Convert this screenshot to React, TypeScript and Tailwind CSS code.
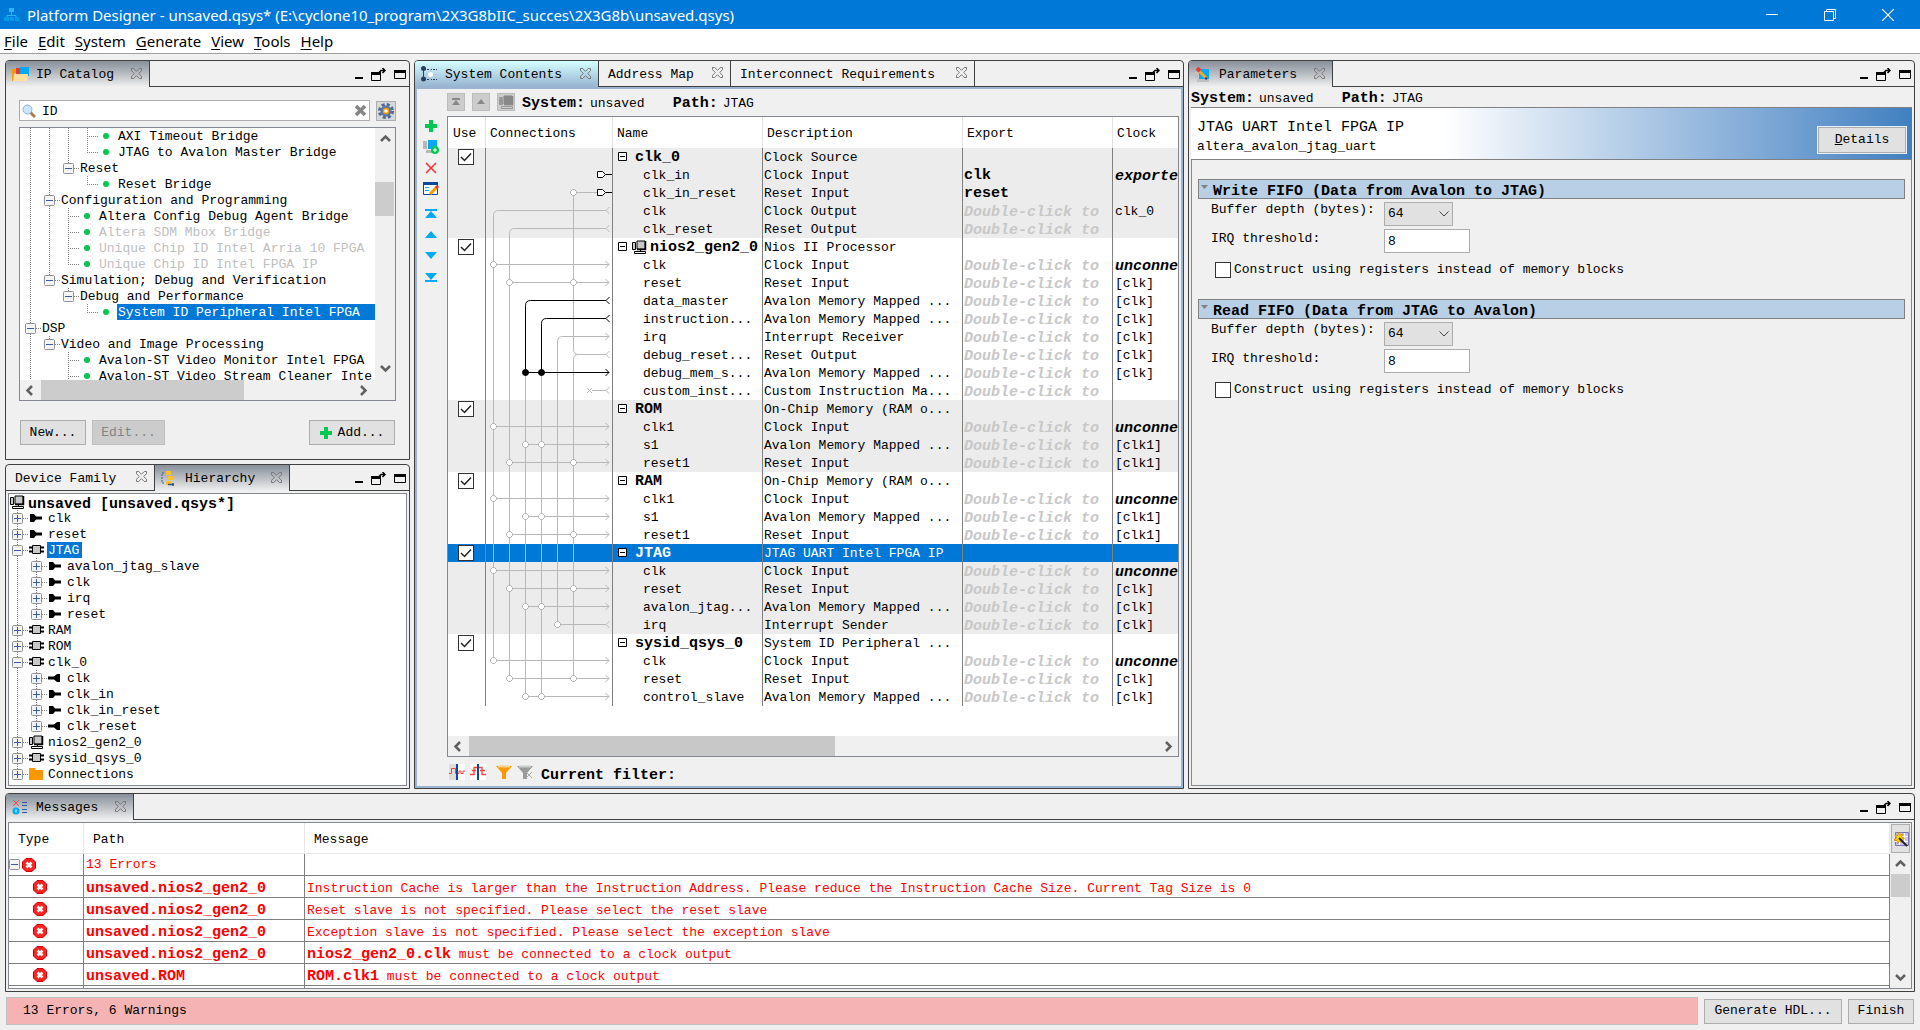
import React from "react";

type P = { children?: React.ReactNode };

/* ---------- shared icons ---------- */

function Svg({ w, h, children, className }: P & { w: number; h: number; className?: string }) {
  return (
    <svg width={w} height={h} viewBox={`0 0 ${w} ${h}`} fill="none" aria-hidden="true" className={"shrink-0 " + (className ?? "")}>
      {children}
    </svg>
  );
}

const TabClose = () => (
  <Svg w={11} h={11}>
    <path d="M.5.5h2.2L5.5 3.3 8.3.5h2.2v2.2L7.7 5.5l2.8 2.8v2.2H8.3L5.5 7.7 2.7 10.5H.5V8.3l2.8-2.8L.5 2.7z" stroke="#777" />
  </Svg>
);

const NiosIcon = ({ dim }: { dim?: boolean }) => (
  <Svg w={15} h={14}>
    <path d="M5 1h8v8H5z" fill={dim ? "#888" : "#c8c8c8"} stroke={dim ? "#888" : "#000"} />
    <path d="M13.500 1v8.500H5" stroke={dim ? "#888" : "#000"} strokeWidth="1.500" />
    <path d="M.5 2.500h3v7h-3z" fill={dim ? "#999" : "#c8c8c8"} stroke={dim ? "#999" : "#000"} />
    <path d="M8.500 9.500v2M2.500 11.500h11v2h-11z" stroke={dim ? "#999" : "#000"} />
  </Svg>
);

const ChipIcon = () => (
  <Svg w={15} h={10}>
    <path d="M0 2.500h15M0 6.500h15" stroke="#000" strokeWidth="2" />
    <path d="M3.500.5h8v8h-8z" fill="#c8c8c8" stroke="#000" />
  </Svg>
);

const PlugIn = () => (
  <Svg w={13} h={8}>
    <path d="M1 0h4l2 2.500h6v3H7L5 8H1z" fill="#000" />
  </Svg>
);

const PlugOut = () => (
  <Svg w={13} h={8}>
    <path d="M12 0H9L6 2.500H0v3h6L9 8h3z" fill="#000" />
  </Svg>
);

const FolderIcon = () => (
  <Svg w={15} h={12}>
    <path d="M0 0h6l1 2h7v10H0z" fill="#ff9800" />
  </Svg>
);

const Plus = () => (
  <Svg w={12} h={12}>
    <path d="M4 0h4v4h4v4H8v4H4V8H0V4h4z" fill="#00c853" />
  </Svg>
);

const ErrorIcon = () => (
  <Svg w={14} h={14}>
    <path d="M4 .5h6L13.500 4v6L10 13.500H4L.5 10V4z" fill="#f22" stroke="#d00000" />
    <path d="M4.500 4.500l5 5M9.500 4.500l-5 5" stroke="#fff" strokeWidth="2.600" />
  </Svg>
);

const arrowPaths = {
  up: "M1 7l4.500-4.500L10 7",
  down: "M1 3l4.500 4.500L10 3",
  left: "M7 1L2.500 5.500 7 10",
  right: "M3 1l4.500 4.500L3 10",
};

function ScrollArrow({ dir }: { dir: keyof typeof arrowPaths }) {
  return (
    <button aria-label={"Scroll " + dir} className="flex size-5 shrink-0 items-center justify-center">
      <Svg w={11} h={11}>
        <path d={arrowPaths[dir]} stroke="#606060" strokeWidth="2.500" />
      </Svg>
    </button>
  );
}

/* ---------- panels ---------- */

type Tab = { label: string; icon?: React.ReactNode; width: string; active?: boolean };

function WindowControls() {
  return (
    <div className="flex items-center gap-2 pt-0.5 pr-[3px]">
      <button aria-label="Minimize" className="mt-2">
        <Svg w={8} h={3}><path d="M0 1h8" stroke="#000" strokeWidth="2" /></Svg>
      </button>
      <button aria-label="Float">
        <Svg w={15} h={14}>
          <path d="M.5 4.500h9v8h-9z" stroke="#000" />
          <path d="M0 5.500h10" stroke="#000" strokeWidth="3" />
          <path d="M7 5.500l3-3h4M11.500 0l2.500 2.500L11.500 5" stroke="#000" strokeWidth="1.500" />
        </Svg>
      </button>
      <button aria-label="Maximize">
        <Svg w={12} h={10}>
          <path d="M.5.5h11v8H.5z" stroke="#000" />
          <path d="M0 1.500h12" stroke="#000" strokeWidth="3" />
        </Svg>
      </button>
    </div>
  );
}

function Panel({ tabs, focused, className, children }: P & { tabs: Tab[]; focused?: boolean; className?: string }) {
  return (
    <section className={"flex min-w-0 flex-col overflow-hidden rounded-t-[4px] border border-[#404040] bg-[#f0f0f0] " + (className ?? "")}>
      <div className="flex h-[26px] shrink-0">
        {tabs.map((t) => {
          const look = !t.active
            ? "border-b"
            : focused
              ? "bg-linear-to-b from-[#d5ffff] to-[#98b3d0]"
              : "bg-linear-to-b from-[#878f99] to-[#f0f0f0]";
          return (
            <button key={t.label} className={`flex shrink-0 items-center border-r border-[#404040] pr-[7px] pl-1.5 ${t.width} ${look}`}>
              {t.icon && <span className="mr-[7px] w-[17px]">{t.icon}</span>}
              <span className={t.icon ? "pt-0.5" : "pt-0.5 pl-[3px]"}>{t.label}</span>
              <span className="ml-auto pb-0.5"><TabClose /></span>
            </button>
          );
        })}
        <div className="flex flex-1 items-center justify-end border-b border-[#404040]">
          <WindowControls />
        </div>
      </div>
      {children}
    </section>
  );
}

function PathLine() {
  return (
    <p className="flex items-center pt-1 leading-[18px]">
      <b className="text-[15px]">System:</b>
      <span className="ml-[5px]">unsaved</span>
      <b className="ml-7 text-[15px]">Path:</b>
      <span className="ml-[5px]">JTAG</span>
    </p>
  );
}

/* ---------- trees ---------- */

/* Guide codes: "|" line, "t" branch, "l" last branch, "." blank,
   "m" minus with line through, "n" minus at the end of a line, "p" plus, "q" last plus */
function Guide({ code }: { code: string }) {
  const box = "mnpq".includes(code);
  const full = "|tmp".includes(code);
  const branch = "tlmnpq".includes(code);
  return (
    <Svg w={19} h={16}>
      {code !== "." && <path d={full ? "M8.500 0V16" : "M8.500 0V8"} stroke="#808080" strokeDasharray="1 1" />}
      {branch && <path d="M8 8.500H19" stroke="#808080" strokeDasharray="1 1" />}
      {box && (
        <>
          <rect x="3.500" y="3.500" width="10" height="10" rx="1" fill="#f4f4f4" stroke="#919191" />
          <path d="M5 8.500h7" stroke="#3a5ba8" />
          {"pq".includes(code) && <path d="M8.500 5v7" stroke="#3a5ba8" />}
        </>
      )}
    </Svg>
  );
}

const catalog: [string, string, string?][] = [
  ["|||t", "AXI Timeout Bridge"],
  ["|||l", "JTAG to Avalon Master Bridge"],
  ["||n", "Reset"],
  ["||.l", "Reset Bridge"],
  ["|m", "Configuration and Programming"],
  ["||t", "Altera Config Debug Agent Bridge"],
  ["||t", "Altera SDM Mbox Bridge", "off"],
  ["||t", "Unique Chip ID Intel Arria 10 FPGA", "off"],
  ["||l", "Unique Chip ID Intel FPGA IP", "off"],
  ["|n", "Simulation; Debug and Verification"],
  ["|.n", "Debug and Performance"],
  ["|..l", "System ID Peripheral Intel FPGA", "sel"],
  ["m", "DSP"],
  ["|n", "Video and Image Processing"],
  ["|.t", "Avalon-ST Video Monitor Intel FPGA"],
  ["|.t", "Avalon-ST Video Stream Cleaner Inte"],
];

function CatalogTree() {
  return (
    <ul className="h-[252px] min-w-0 flex-1 overflow-hidden bg-white pl-0.5">
      {catalog.map(([g, label, state]) => {
        const leaf = /[tl]$/.test(g);
        const tone = state === "sel" ? "flex-1 bg-[#0078d7] text-white" : state === "off" ? "text-[#c0c0c0]" : "";
        return (
          <li key={g + label} className="flex h-4 items-center leading-4 whitespace-pre">
            {g.split("").map((c, i) => <Guide key={i} code={c} />)}
            {leaf && (
              <span className="w-[19px] shrink-0 pl-[5px]">
                <span className="block size-1.5 rounded-full bg-[#00c853]" />
              </span>
            )}
            <span className={"h-4 pl-px leading-[18px] " + tone}>{label}</span>
          </li>
        );
      })}
    </ul>
  );
}

const hierarchy: [string, React.ReactNode, string, boolean?][] = [
  ["p", <PlugIn />, "clk"],
  ["p", <PlugIn />, "reset"],
  ["m", <ChipIcon />, "JTAG", true],
  ["|p", <PlugIn />, "avalon_jtag_slave"],
  ["|p", <PlugIn />, "clk"],
  ["|p", <PlugIn />, "irq"],
  ["|q", <PlugIn />, "reset"],
  ["p", <ChipIcon />, "RAM"],
  ["p", <ChipIcon />, "ROM"],
  ["m", <ChipIcon />, "clk_0"],
  ["|p", <PlugOut />, "clk"],
  ["|p", <PlugIn />, "clk_in"],
  ["|p", <PlugIn />, "clk_in_reset"],
  ["|q", <PlugOut />, "clk_reset"],
  ["p", <NiosIcon />, "nios2_gen2_0"],
  ["p", <ChipIcon />, "sysid_qsys_0"],
  ["q", <FolderIcon />, "Connections"],
];

/* ---------- system contents ---------- */

type Row = { name: string; desc: string; head?: boolean; exp?: string; clk?: string };
type Group = { shade: boolean; rows: Row[] };

const AMM = "Avalon Memory Mapped ...";
const DC = "Double-click to";
const UN = "unconne";
const r = (name: string, desc: string, clk = "", exp = DC): Row => ({ name, desc, clk, exp });
const head = (name: string, desc: string): Row => ({ name, desc, head: true });

const groups: Group[] = [
  { shade: true, rows: [
    head("clk_0", "Clock Source"),
    r("clk_in", "Clock Input", "exporte", "clk"),
    r("clk_in_reset", "Reset Input", "", "reset"),
    r("clk", "Clock Output", "clk_0"),
    r("clk_reset", "Reset Output"),
  ] },
  { shade: false, rows: [
    head("nios2_gen2_0", "Nios II Processor"),
    r("clk", "Clock Input", UN),
    r("reset", "Reset Input", "[clk]"),
    r("data_master", AMM, "[clk]"),
    r("instruction...", AMM, "[clk]"),
    r("irq", "Interrupt Receiver", "[clk]"),
    r("debug_reset...", "Reset Output", "[clk]"),
    r("debug_mem_s...", AMM, "[clk]"),
    r("custom_inst...", "Custom Instruction Ma..."),
  ] },
  { shade: true, rows: [
    head("ROM", "On-Chip Memory (RAM o..."),
    r("clk1", "Clock Input", UN),
    r("s1", AMM, "[clk1]"),
    r("reset1", "Reset Input", "[clk1]"),
  ] },
  { shade: false, rows: [
    head("RAM", "On-Chip Memory (RAM o..."),
    r("clk1", "Clock Input", UN),
    r("s1", AMM, "[clk1]"),
    r("reset1", "Reset Input", "[clk1]"),
  ] },
  { shade: true, rows: [
    head("JTAG", "JTAG UART Intel FPGA IP"),
    r("clk", "Clock Input", UN),
    r("reset", "Reset Input", "[clk]"),
    r("avalon_jtag...", AMM, "[clk]"),
    r("irq", "Interrupt Sender", "[clk]"),
  ] },
  { shade: false, rows: [
    head("sysid_qsys_0", "System ID Peripheral ..."),
    r("clk", "Clock Input", UN),
    r("reset", "Reset Input", "[clk]"),
    r("control_slave", AMM, "[clk]"),
  ] },
];

const Y = (i: number) => i * 18 + 8.5;
const G = "#b8b8b8";

function Wire({ row, from, kind, color = G }: { row: number; from: number; kind: "in" | "out"; color?: string }) {
  const y = Y(row);
  const tip = kind === "in" ? `M119.500 ${y - 3.5}l3.500 3.500l-3.500 3.500` : `M123.500 ${y - 3.5}l-3.500 3.500l3.500 3.500`;
  return <path d={`M${from} ${y}H${kind === "in" ? 123 : 120}${tip}`} stroke={color} />;
}

function Node({ x, row }: { x: number; row: number }) {
  const y = Y(row);
  return <path d={`M${x - 1} ${y - 3}h2l2 2v2l-2 2h-2l-2-2v-2z`} fill="#fff" stroke="#b0b0b0" />;
}

const taps: [number, number[], ("in" | "out")?][] = [
  [6, [7.5]], [7, [23.5, 87.5]],
  [15, [7.5]], [16, [39.5, 55.5]], [17, [23.5, 87.5]],
  [19, [7.5]], [20, [39.5, 55.5]], [21, [23.5, 87.5]],
  [23, [7.5]], [24, [23.5, 87.5]], [25, [39.5, 55.5]], [26, [71.5], "out"],
  [28, [7.5]], [29, [23.5, 87.5]], [30, [39.5, 55.5]],
];

function bend(x: number, row: number, to: number) {
  const y = Y(row);
  return `M${x} ${Y(to)}V${y + 5}q0-5 5-5`;
}

function ConnectionDiagram() {
  return (
    <svg width="126" height="558" viewBox="0 0 126 558" fill="none" aria-hidden="true" className="pointer-events-none absolute top-[31px] left-[38px]">
      <g stroke={G}>
        <path d={bend(7.5, 3, 28)} />
        <path d={bend(23.5, 4, 29)} />
        <path d={`M39.500 ${Y(12)}V${Y(30)}M55.500 ${Y(12)}V${Y(30)}`} />
        <path d={bend(71.5, 10, 26)} />
        <path d={`M87.500 ${Y(2)}V${Y(11) - 5}q0 5 5 5`} />
        <path d={bend(87.5, 11, 29)} />
        <path d={`M87.500 ${Y(2)}H112`} />
        <path d={`M101 ${Y(13) - 2.5}l5 5m0-5l-5 5`} />
      </g>
      <Wire row={3} from={12.5} kind="out" />
      <Wire row={4} from={28.5} kind="out" />
      <Wire row={10} from={76.5} kind="in" />
      <Wire row={11} from={92.5} kind="out" />
      <Wire row={13} from={106} kind="out" />
      {taps.map(([row, xs, kind]) => <Wire key={row} row={row} from={xs[0]} kind={kind ?? "in"} />)}
      <Node x={87.5} row={2} />
      {taps.map(([row, xs]) => xs.map((x) => <Node key={row + "-" + x} x={x} row={row} />))}
      <g stroke="#000">
        <path d={bend(39.5, 8, 12)} />
        <path d={bend(55.5, 9, 12)} />
        {[1, 2].map((i) => (
          <path key={i} d={`M111.500 ${Y(i) - 3}h5l3 3l-3 3h-5zM119.500 ${Y(i)}H126`} fill="#fff" />
        ))}
        <circle cx="39.500" cy={Y(12)} r="3" fill="#000" />
        <circle cx="55.500" cy={Y(12)} r="3" fill="#000" />
      </g>
      <Wire row={8} from={44.5} kind="out" color="#000" />
      <Wire row={9} from={60.5} kind="out" color="#000" />
      <Wire row={12} from={39.5} kind="in" color="#000" />
    </svg>
  );
}

function CheckBox({ id, checked, label }: { id?: string; checked?: boolean; label?: string }) {
  return (
    <span className="relative block size-4 shrink-0">
      <input id={id} type="checkbox" aria-label={label} defaultChecked={checked} className="peer block size-4 appearance-none border border-[#333] bg-white" />
      <svg viewBox="0 0 16 16" fill="none" aria-hidden="true" className="pointer-events-none absolute inset-0 hidden size-4 peer-checked:block">
        <path d="M3 8l3.500 3.500L13 4.500" stroke="#222" strokeWidth="1.500" />
      </svg>
    </span>
  );
}

function SystemTable() {
  const th = "border-r border-[#e2e2e2] font-normal text-left pt-0.5";
  const td = "border-r border-[#808080] p-0 overflow-hidden";
  return (
    <div className="relative">
      <table className="w-full table-fixed border-separate border-spacing-0 whitespace-pre">
        <colgroup>
          <col className="w-[38px]" /><col className="w-[127px]" /><col className="w-[150px]" />
          <col className="w-[200px]" /><col className="w-[150px]" /><col />
        </colgroup>
        <thead>
          <tr className="h-[31px]">
            <th className={th + " pl-[5px]"}>Use</th>
            <th className={th + " pl-1"}>Connections</th>
            <th className={th + " pl-1"}>Name</th>
            <th className={th + " pl-1"}>Description</th>
            <th className={th + " pl-1"}>Export</th>
            <th className="pt-0.5 pl-1 text-left font-normal">Clock</th>
          </tr>
        </thead>
        <tbody>
          {groups.map((g, gi) => g.rows.map((row, i) => {
            const sel = row.head && row.name === "JTAG";
            const tone = sel ? "bg-[#0078d7] text-white" : g.shade ? "bg-[#ececec]" : "bg-white";
            const exported = row.exp && row.exp !== DC;
            const loud = row.clk === UN || row.clk === "exporte";
            return (
              <tr key={gi + "-" + i} className={"h-[18px] leading-5 " + tone}>
                <td className={td}>
                  {row.head && <div className="pl-2.5"><CheckBox checked label={"Use " + row.name} /></div>}
                </td>
                <td className={td} />
                <td className={td}>
                  {row.head ? (
                    <div className="flex h-[18px] items-center pl-[5px]">
                      <Svg w={10} h={10} className="mr-1">
                        <path d="M.5.5h8v8h-8z" fill="#fff" stroke="#000" /><path d="M2 4.500h5" stroke="#000" />
                      </Svg>
                      {row.name === "nios2_gen2_0" ? <span className="mr-[3px]"><NiosIcon /></span> : <span className="w-[3px]" />}
                      <b className="pt-0.5 text-[15px] leading-4">{row.name}</b>
                    </div>
                  ) : (
                    <div className="h-[18px] pl-[30px]">{row.name}</div>
                  )}
                </td>
                <td className={td}><div className="h-[18px] pl-px">{row.desc}</div></td>
                <td className={td}>
                  <div className={"h-[18px] pl-px text-[15px] font-bold " + (exported ? "" : "pt-0.5 leading-[18px] text-[#c8c8c8] italic")}>{row.exp}</div>
                </td>
                <td className="overflow-hidden p-0">
                  <div className={"h-[18px] pl-0.5 " + (loud ? "pt-0.5 text-[15px] leading-[18px] font-bold italic" : "")}>{row.clk}</div>
                </td>
              </tr>
            );
          }))}
        </tbody>
      </table>
      <ConnectionDiagram />
    </div>
  );
}

function ToolStrip() {
  const tools: [string, React.ReactNode][] = [
    ["Add", <Plus />],
    ["Add component", <Svg w={16} h={15}><path d="M0 2h4v8H0zM3 11h7v3H3z" fill="#b8b8b8" /><path d="M5 1h9v9H5z" fill="#03a9f4" /><circle cx="12" cy="11" r="4" fill="#00c853" /><path d="M12 9v4M10 11h4" stroke="#fff" /></Svg>],
    ["Remove", <Svg w={12} h={12}><path d="M1 1l10 10M11 1L1 11" stroke="#f03030" strokeWidth="1.500" /></Svg>],
    ["Edit", <Svg w={16} h={14}><path d="M.5.5h14v12H.5z" fill="#fff" stroke="#0d47a1" /><path d="M0 1.500h15" stroke="#0d47a1" strokeWidth="3" /><path d="M2 5.500h4M2 8.500h4" stroke="#03a9f4" /><path d="M7 12l7-7" stroke="#ff9800" strokeWidth="3" /><path d="M13 6l2-2" stroke="#e53935" strokeWidth="3" /></Svg>],
    ["Move to top", <Svg w={12} h={10}><path d="M0 1h12" stroke="#03a9f4" strokeWidth="2" /><path d="M6 2l6 7H0z" fill="#03a9f4" /></Svg>],
    ["Move up", <Svg w={12} h={8}><path d="M6 0l6 7H0z" fill="#03a9f4" /></Svg>],
    ["Move down", <Svg w={12} h={8}><path d="M6 7l6-7H0z" fill="#03a9f4" /></Svg>],
    ["Move to bottom", <Svg w={12} h={10}><path d="M0 9h12" stroke="#03a9f4" strokeWidth="2" /><path d="M6 8l6-7H0z" fill="#03a9f4" /></Svg>],
  ];
  return (
    <div className="flex w-7 shrink-0 flex-col items-center pt-[26px]">
      {tools.map(([name, icon], i) => (
        <button key={name} aria-label={name} className={"flex h-[21px] w-full items-center justify-center " + (i === 4 ? "mt-1" : "")}>{icon}</button>
      ))}
    </div>
  );
}

function SystemContents() {
  const small = "flex size-[18px] items-center justify-center border border-[#bcbcbc] bg-[#cccccc]";
  return (
    <div className="flex flex-1 border-2 border-[#9ab4d1]">
      <ToolStrip />
      <div className="ml-0.5 flex min-w-0 flex-1 flex-col pr-0.5">
        <div className="flex h-[27px] items-center pb-0.5">
          <button aria-label="Top level" className={small}><Svg w={8} h={8}><path d="M0 1h8" stroke="#888" strokeWidth="2" /><path d="M4 2l4 5H0z" fill="#888" /></Svg></button>
          <button aria-label="Up one level" className={small + " ml-[7px]"}><Svg w={8} h={6}><path d="M4 0l4 5H0z" fill="#888" /></Svg></button>
          <button aria-label="Drill into" className={small + " mr-[7px] ml-[7px]"}><NiosIcon dim /></button>
          <PathLine />
        </div>
        <div className="flex flex-1 flex-col overflow-hidden border border-[#828790] bg-white">
          <SystemTable />
          <div className="mt-auto flex h-5 bg-[#f0f0f0]">
            <ScrollArrow dir="left" />
            <div className="flex flex-1"><div className="ml-px w-[53%] bg-[#c8c8c8]" /></div>
            <ScrollArrow dir="right" />
          </div>
        </div>
        <div className="flex h-[29px] items-center gap-[5px] pl-0.5">
          <Svg w={16} h={16}><path d="M0 0h7v16H0z" fill="#dcdcdc" /><path d="M9 0h7v16H9z" fill="#fff" /><path d="M0 9.500h2.500v-5h4v5H10V7h2v2.500h2V7h2" stroke="#f44336" /><path d="M8 0v16" stroke="#0d47a1" strokeWidth="2" /></Svg>
          <Svg w={16} h={16}><path d="M0 0h16v16H0z" fill="#fff" /><path d="M0 10.500h4v-7h8v7h4M2 6.500h4M10 6.500h5" stroke="#f44336" strokeWidth="1.300" /><path d="M8 0v16" stroke="#0d47a1" strokeWidth="2" /></Svg>
          <Svg w={16} h={14} className="ml-[5px]"><path d="M0 1h16l-6 7v6H6V8z" fill="#ff9800" /><path d="M2 1.500h12" stroke="#ffd180" strokeWidth="2" /></Svg>
          <Svg w={16} h={14}><path d="M0 1h16l-6 7v6H6V8z" fill="#999" /><path d="M2 1.500h12" stroke="#ccc" strokeWidth="2" /><path d="M9 7l6 6M15 7l-6 6" stroke="#aaa" /></Svg>
          <b className="ml-[3px] pt-2 text-[15px]">Current filter:</b>
        </div>
      </div>
    </div>
  );
}

/* ---------- parameters ---------- */

function FifoSection({ id, title }: { id: string; title: string }) {
  return (
    <section className="mb-[19px]">
      <h2 className="flex h-5 items-center gap-[5px] border border-[#808080] bg-[#b8cfe5] pl-0.5 text-[15px] font-bold">
        <Svg w={7} h={12}><path d="M0 2h7L3.500 6z" fill="#808080" /></Svg>
        <span className="pt-1.5 leading-4">{title}</span>
      </h2>
      <div className="grid grid-cols-[173px_auto] pt-[3px] pl-[13px]">
        <label htmlFor={id + "-depth"} className="h-[27px] leading-4">Buffer depth (bytes):</label>
        <span className="relative h-6 w-[69px]">
          <select id={id + "-depth"} className="h-6 w-full appearance-none border border-[#adadad] bg-[#e1e1e1] pl-[3px]">
            <option>64</option>
          </select>
          <Svg w={10} h={6} className="pointer-events-none absolute top-[9px] right-1"><path d="M.5.5L5 5 9.500.5" stroke="#444" /></Svg>
        </span>
        <label htmlFor={id + "-irq"} className="h-[27px] leading-5">IRQ threshold:</label>
        <input id={id + "-irq"} defaultValue="8" className="h-6 w-[86px] border border-[#adadad] bg-white pl-[3px]" />
      </div>
      <div className="mt-1 flex items-center gap-[3px] pl-[17px]">
        <CheckBox id={id + "-reg"} />
        <label htmlFor={id + "-reg"} className="leading-5">Construct using registers instead of memory blocks</label>
      </div>
    </section>
  );
}

function Parameters() {
  return (
    <div className="flex flex-1 flex-col px-0.5 pb-0.5">
      <div className="flex h-5 items-center"><PathLine /></div>
      <div className="flex h-[53px] items-end justify-between border-y border-[#808080] bg-linear-to-r from-white from-35% to-[#4080c0] pr-1.5 pl-1.5">
        <div className="pb-[3px]">
          <h1 className="text-[15px] leading-5">JTAG UART Intel FPGA IP</h1>
          <p className="leading-[18px]">altera_avalon_jtag_uart</p>
        </div>
        <button className="mb-1.5 h-[26px] w-[88px] border border-[#adadad] bg-[#e1e1e1] outline outline-[#e8f0f8]"><u>D</u>etails</button>
      </div>
      <div className="flex-1 border border-t-0 border-[#828790] px-1.5 pt-[19px]">
        <FifoSection id="write" title="Write FIFO (Data from Avalon to JTAG)" />
        <FifoSection id="read" title="Read FIFO (Data from JTAG to Avalon)" />
      </div>
    </div>
  );
}

/* ---------- messages ---------- */

const messages: [string, string, string][] = [
  ["unsaved.nios2_gen2_0", "", "Instruction Cache is larger than the Instruction Address. Please reduce the Instruction Cache Size. Current Tag Size is 0"],
  ["unsaved.nios2_gen2_0", "", "Reset slave is not specified. Please select the reset slave"],
  ["unsaved.nios2_gen2_0", "", "Exception slave is not specified. Please select the exception slave"],
  ["unsaved.nios2_gen2_0", "nios2_gen2_0.clk", " must be connected to a clock output"],
  ["unsaved.ROM", "ROM.clk1", " must be connected to a clock output"],
];

function Messages() {
  const th = "border-r border-b border-[#e8e8e8] text-left font-normal text-black pt-1";
  const td = "border-r border-b border-[#808080] p-0 pl-0.5";
  const last = "border-r border-[#808080] p-0";
  return (
    <div className="m-0.5 flex border border-[#828790] bg-white">
      <table className="flex-1 table-fixed border-separate border-spacing-0 whitespace-pre text-[#f00]">
        <colgroup><col className="w-[75px]" /><col className="w-[221px]" /><col /></colgroup>
        <thead>
          <tr className="h-[31px]">
            <th className={th + " pl-[9px]"}>Type</th>
            <th className={th + " pl-[9px]"}>Path</th>
            <th className={th + " pl-[9px]"}>Message</th>
          </tr>
        </thead>
        <tbody>
          <tr className="h-[22px]">
            <td className="border-r border-b border-[#808080] p-0">
              <div className="flex items-center gap-0.5">
                <Svg w={11} h={11}><rect x=".5" y=".5" width="10" height="10" rx="1" fill="#f4f4f4" stroke="#919191" /><path d="M2 5.500h7" stroke="#3a5ba8" /></Svg>
                <ErrorIcon />
              </div>
            </td>
            <td className={td}>13 Errors</td>
            <td className={td} />
          </tr>
          {messages.map(([path, strong, text], i) => (
            <tr key={i} className="h-[22px] leading-[17px]">
              <td className="border-r border-b border-[#808080] p-0 pl-6"><ErrorIcon /></td>
              <td className={td + " pt-[3px] text-[15px] font-bold"}>{path}</td>
              <td className={td + " pt-[3px]"}><b className="text-[15px]">{strong}</b>{text}</td>
            </tr>
          ))}
          <tr className="h-0.5"><td className={last} /><td className={last} /><td className={last} /></tr>
        </tbody>
      </table>
      <div className="flex w-[21px] flex-col items-center bg-[#f0f0f0]">
        <button aria-label="Message options" className="mt-px mb-px flex h-[29px] w-[19px] shrink-0 items-center justify-center border border-[#adadad] bg-[#e1e1e1]">
          <Svg w={16} h={16}>
            <path d="M2.500 1.500h13v13h-13z" fill="#c9c4ee" stroke="#7a74b0" /><path d="M2 5.500h13M2 10.500h13M6.500 2v12M11.500 2v12" stroke="#fff" />
            <path d="M5.500 1l1.300 3L10 3 8.500 6l3 1.500-3 1 1 3-3.200-1.500L4.500 13 4 9.500 1 9l2.500-2L2 4l3 .5z" fill="#ffd400" stroke="#c98a00" strokeWidth=".8" />
            <path d="M6 7l8 8" stroke="#222" strokeWidth="2" />
          </Svg>
        </button>
        <ScrollArrow dir="up" />
        <div className="h-[23px] w-[19px] bg-[#cccccc]" />
        <div className="mt-auto mb-px"><ScrollArrow dir="down" /></div>
      </div>
    </div>
  );
}

/* ---------- tab icons ---------- */

const catalogIcon = <Svg w={17} h={16}><path d="M0 3h6v4H0z" fill="#ff9800" /><path d="M4 2h6v6H4z" fill="#e53935" /><path d="M8 1h9v9H8z" fill="#03a9f4" /><path d="M0 6h2v9H0z" fill="#ff9800" /><path d="M2 8h14l-1 7H1z" fill="#ffe0a0" /></Svg>;
const hierarchyIcon = <Svg w={15} h={15}><path d="M3 2H1v10h3" stroke="#455a8a" strokeDasharray="2 1" /><path d="M5 0h5v4H5zM7 5h5v4H7zM5 10h5v4H5z" fill="#fbc02d" /><path d="M7 13.500h6M12 12v3" stroke="#36527a" strokeWidth="1.500" /></Svg>;
const contentsIcon = <Svg w={17} h={16}><path d="M3 3.500h13M3 13.500h13" stroke="#2c3e60" strokeDasharray="2 1" /><path d="M3 8.500h13M9.500 3v11" stroke="#b0c4dc" /><path d="M2.500 2v12" stroke="#2c3e60" /><circle cx="2.500" cy="2.500" r="2.500" fill="#2c3e60" /><circle cx="2.500" cy="13" r="2.500" fill="#2c3e60" /><circle cx="9.500" cy="8.500" r="2.500" fill="#fff" /></Svg>;
const paramIcon = <Svg w={15} h={15}><path d="M0 5h3v6H0zM2 12h12v3H2z" fill="#c0c0c0" /><path d="M4 2h10v10H4z" fill="#03a9f4" /><path d="M4 4l7 7" stroke="#f9a825" strokeWidth="3" /><path d="M2 1l3 3" stroke="#e53935" strokeWidth="4" /><path d="M10 11l2 1" stroke="#0d47a1" strokeWidth="2" /></Svg>;
const messageIcon = <Svg w={16} h={16}><path d="M1 1l6 6M7 1L1 7" stroke="#f05050" /><circle cx="4" cy="12" r="3.500" fill="#03a9f4" /><path d="M4 10.500v3" stroke="#fff" /><path d="M10 3.500h5M10 6.500h5M10 10.500h5M10 13.500h5" stroke="#3058a8" /></Svg>;

/* ---------- application ---------- */

export default function App() {
  const btn = "h-[25px] border border-[#adadad] bg-[#e1e1e1]";
  return (
    <div className="flex min-h-screen flex-col bg-[#f0f0f0] font-['Liberation_Mono',monospace] text-[13px] leading-[18px] text-black">
      <header className="flex h-[29px] items-center bg-[#0078d7] pl-1 font-['Noto_Sans',sans-serif] text-[15px] text-white">
        <Svg w={15} h={14}><path d="M7.500 4v3M3 10V7.500h9V10" stroke="#29b6f6" /><path d="M5 0h5v4H5z" fill="#29b6f6" /><path d="M0 9h5v4H0zM6 9h4v4H6zM11 9h4v4h-4z" fill="#039be5" /></Svg>
        <span className="ml-2 flex-1">{"Platform Designer - unsaved.qsys* (E:\\cyclone10_program\\2X3G8bIIC_succes\\2X3G8b\\unsaved.qsys)"}</span>
        <button aria-label="Minimize window" className="flex w-[58px] justify-center"><Svg w={12} h={12}><path d="M0 5.500h12" stroke="#fff" /></Svg></button>
        <button aria-label="Restore window" className="flex w-[58px] justify-center"><Svg w={12} h={12}><path d="M.5 2.500h9v9h-9zM2.500 2V.5h9v9H10" stroke="#fff" /></Svg></button>
        <button aria-label="Close window" className="mr-[3px] flex w-[58px] justify-center"><Svg w={12} h={12}><path d="M0 0l12 12M12 0L0 12" stroke="#fff" strokeWidth="1.200" /></Svg></button>
      </header>
      <nav className="flex h-[25px] items-center gap-2.5 border-b border-[#a0a0a0] bg-white pl-1 font-['Noto_Sans',sans-serif] text-[15px]">
        {["File", "Edit", "System", "Generate", "View", "Tools", "Help"].map((m) => (
          <button key={m}><u className="underline-offset-2">{m[0]}</u>{m.slice(1)}</button>
        ))}
      </nav>

      <main className="flex flex-1 flex-col px-[5px] pt-1.5 pb-[5px]">
        <div className="grid flex-1 grid-cols-[405fr_770fr_727fr] gap-1">
          <div className="flex min-w-0 flex-col gap-1">
            <Panel tabs={[{ label: "IP Catalog", icon: catalogIcon, width: "w-[144px]", active: true }]}>
              <div className="px-[13px] pt-[13px] pb-[14px]">
                <div className="flex items-center gap-1.5">
                  <div className="flex h-[21px] flex-1 items-center border border-[#adadad] bg-white px-0.5">
                    <Svg w={14} h={14}><path d="M8 8l5 5" stroke="#b07a40" strokeWidth="3" /><circle cx="5.500" cy="5.500" r="4.500" fill="#cfe4f8" stroke="#8fb0d8" /></Svg>
                    <input aria-label="Search catalog" defaultValue="ID" className="ml-1.5 min-w-0 flex-1 pt-0.5 outline-none" />
                    <button aria-label="Clear search"><Svg w={13} h={13}><path d="M2 2l9 9M11 2l-9 9" stroke="#858585" strokeWidth="3.500" /></Svg></button>
                  </div>
                  <button aria-label="Catalog settings" className="flex size-5 items-center justify-center border border-[#adadad] bg-[#d8d8d8]">
                    <Svg w={16} h={16}>
                      <circle cx="8" cy="8" r="6.500" stroke="#4a6a96" strokeWidth="3" strokeDasharray="3 2.100" />
                      <circle cx="8" cy="8" r="5.500" fill="#5878a4" /><circle cx="8" cy="8" r="2.500" fill="#fff" stroke="#ff9800" strokeWidth="1.500" />
                    </Svg>
                  </button>
                </div>
                <div className="mt-1.5 border border-[#828790] bg-[#f0f0f0]">
                  <div className="flex">
                    <CatalogTree />
                    <div className="flex w-5 flex-col pt-px">
                      <ScrollArrow dir="up" />
                      <div className="mt-[33px] h-[34px] w-[19px] bg-[#cccccc]" />
                      <div className="mt-auto mb-0.5"><ScrollArrow dir="down" /></div>
                    </div>
                  </div>
                  <div className="flex h-5 pr-[22px]">
                    <ScrollArrow dir="left" />
                    <div className="flex flex-1"><div className="ml-px w-[65%] bg-[#cccccc]" /></div>
                    <ScrollArrow dir="right" />
                  </div>
                </div>
                <div className="mt-[19px] flex gap-1.5 px-px">
                  <button className={btn + " w-[66px]"}>New...</button>
                  <button disabled className="h-[25px] w-[73px] border border-[#bfbfbf] bg-[#cccccc] text-[#838383]">Edit...</button>
                  <button className={btn + " ml-auto flex w-[86px] items-center justify-center gap-1.5"}><Plus />Add...</button>
                </div>
              </div>
            </Panel>
            <Panel
              className="flex-1"
              tabs={[
                { label: "Device Family", width: "w-[149px]" },
                { label: "Hierarchy", icon: hierarchyIcon, width: "w-[135px]", active: true },
              ]}
            >
              <div className="m-0.5 flex-1 border border-[#828790] bg-white">
                <p className="flex h-4 items-center pl-px text-[15px] leading-4 font-bold">
                  <NiosIcon /><span className="pt-1.5 pl-[3px]">unsaved [unsaved.qsys*]</span>
                </p>
                <ul>
                  {hierarchy.map(([g, icon, label, sel], i) => (
                    <li key={i} className="flex h-4 items-center leading-4">
                      {g.split("").map((c, k) => <Guide key={k} code={c} />)}
                      <span className="flex w-[19px] justify-start pl-px">{icon}</span>
                      <span className={"h-4 pl-px leading-[18px] " + (sel ? "bg-[#0078d7] pr-[3px] text-white" : "")}>{label}</span>
                    </li>
                  ))}
                </ul>
              </div>
            </Panel>
          </div>

          <Panel
            focused
            tabs={[
              { label: "System Contents", icon: contentsIcon, width: "w-[184px]", active: true },
              { label: "Address Map", width: "w-[132px]" },
              { label: "Interconnect Requirements", width: "w-[244px]" },
            ]}
          >
            <SystemContents />
          </Panel>

          <Panel tabs={[{ label: "Parameters", icon: paramIcon, width: "w-[144px]", active: true }]}>
            <Parameters />
          </Panel>
        </div>

        <Panel className="mt-1" tabs={[{ label: "Messages", icon: messageIcon, width: "w-[128px]", active: true }]}>
          <Messages />
        </Panel>

        <footer className="mt-[5px] flex items-center gap-1.5 px-px">
          <p className="flex h-7 flex-1 items-center border border-[#c0c0c0] bg-[#f5b3b3] pl-4">13 Errors, 6 Warnings</p>
          <button className={btn + " w-[138px]"}>Generate HDL...</button>
          <button className={btn + " w-[66px]"}>Finish</button>
        </footer>
      </main>
    </div>
  );
}
